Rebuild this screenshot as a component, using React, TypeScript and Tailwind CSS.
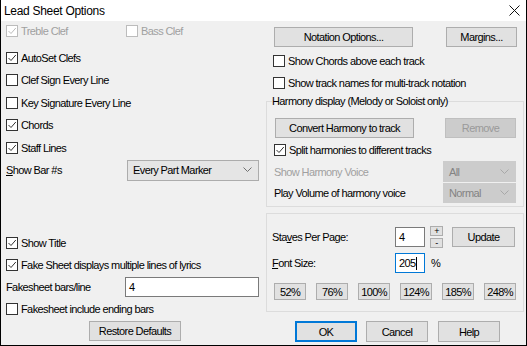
import React from "react"

type CheckProps = { label: React.ReactNode; checked?: boolean; disabled?: boolean; className?: string }

function Check({ label, checked, disabled, className = "" }: CheckProps) {
  const stroke = disabled ? "#bcbcbc" : "#333333"
  return (
    <div className={`flex items-center ${className}`}>
      <span className={`w-[12px] h-[12px] border bg-white flex items-center justify-center ${disabled ? "border-[#bcbcbc]" : "border-[#333333]"}`}>
        {checked && (
          <svg width="10" height="10" viewBox="0 0 10 10">
            <path d="M1.5 5 L4 7.5 L8.8 2" fill="none" stroke={stroke} strokeWidth="1" />
          </svg>
        )}
      </span>
      <span className={`ml-[3px] ${disabled ? "text-[#a0a0a0]" : "text-black"}`}>{label}</span>
    </div>
  )
}

function Btn({ children, className = "", disabled, primary }: { children: React.ReactNode; className?: string; disabled?: boolean; primary?: boolean }) {
  return (
    <button
      className={`flex items-center justify-center ${primary ? "border-2 border-[#0078d7]" : "border"} ${
        disabled ? "bg-[#cccccc] border-[#bfbfbf] text-[#9a9a9a]" : "bg-[#e1e1e1] text-black"
      } ${!primary && !disabled ? "border-[#adadad]" : ""} ${className}`}
    >
      {children}
    </button>
  )
}

function Select({ value, className = "", disabled }: { value: string; className?: string; disabled?: boolean }) {
  return (
    <div
      className={`flex items-center justify-between border pl-[5px] pr-[6px] ${
        disabled ? "bg-[#cccccc] border-[#cccccc] text-[#838383]" : "bg-[#e5e5e5] border-[#acacac] text-black"
      } ${className}`}
    >
      <span>{value}</span>
      <svg width="9" height="6" viewBox="0 0 9 6">
        <path d="M0.5 0.5 L4.5 4.5 L8.5 0.5" fill="none" stroke={disabled ? "#a8a8a8" : "#707070"} strokeWidth="1" />
      </svg>
    </div>
  )
}

function Field({ value, className = "", focused }: { value: string; className?: string; focused?: boolean }) {
  return (
    <div className={`flex items-center bg-white border pl-[3px] ${focused ? "border-[#0078d7]" : "border-[#7a7a7a]"} ${className}`}>
      <span>{value}</span>
      {focused && <span className="w-px h-[13px] bg-black" />}
    </div>
  )
}

export default function App() {
  return (
    <div className="w-[527px] h-[346px] bg-[#f0f0f0] border-x border-b border-black flex flex-col font-['Liberation_Sans',Arial,sans-serif] text-[11px] leading-[14px] tracking-[-0.6px] select-none">
      <div className="h-[21px] bg-white flex items-center justify-between pl-[3px] pr-[6px] shrink-0">
        <span className="text-[12px] tracking-[-0.3px]">Lead Sheet Options</span>
        <svg width="11" height="11" viewBox="0 0 11 11">
          <path d="M0.5 0.5 L10.5 10.5 M10.5 0.5 L0.5 10.5" stroke="#111" strokeWidth="1" />
        </svg>
      </div>

      <div className="flex flex-1">
        {/* left column */}
        <div className="w-[265px] pl-[5px] flex flex-col">
          <div className="h-[20px] flex items-center">
            <Check label="Treble Clef" checked disabled className="w-[120px]" />
            <Check label="Bass Clef" disabled />
          </div>
          <Check label="AutoSet Clefs" checked className="h-[22px] mt-[6px]" />
          <Check label="Clef Sign Every Line" className="h-[22.5px]" />
          <Check label="Key Signature Every Line" className="h-[22.5px]" />
          <Check label="Chords" checked className="h-[22.5px]" />
          <Check label="Staff Lines" checked className="h-[22.5px]" />
          <div className="h-[22.5px] flex items-center">
            <span className="w-[121px]">
              <span className="underline">S</span>how Bar #s
            </span>
            <Select value="Every Part Marker" className="w-[132px] h-[21px]" />
          </div>

          <Check label="Show Title" checked className="h-[22px] mt-[50px]" />
          <Check label="Fake Sheet displays multiple lines of lyrics" checked className="h-[22px]" />
          <div className="h-[22px] flex items-center">
            <span className="w-[119px]">Fakesheet bars/line</span>
            <Field value="4" className="w-[134px] h-[20px]" />
          </div>
          <Check label="Fakesheet include ending bars" className="h-[22px]" />
          <Btn className="ml-[83px] mt-[1px] w-[92px] h-[20px]">Restore Defaults</Btn>
        </div>

        {/* right column */}
        <div className="w-[258px] flex flex-col">
          <div className="flex items-center mt-[6px] pl-[8px] pr-[7px] justify-between">
            <Btn className="w-[139px] h-[20px]">Notation Options...</Btn>
            <Btn className="w-[71px] h-[20px]">Margins...</Btn>
          </div>
          <Check label="Show Chords above each track" className="h-[22px] mt-[3px] pl-[7px]" />
          <Check label="Show track names for multi-track notation" className="h-[22px] pl-[7px]" />

          <fieldset className="border border-[#dcdcdc] px-[7px] pb-[3px]">
            <legend className="ml-[-2px]">Harmony display (Melody or Soloist only)</legend>
            <div className="flex items-center justify-between mt-[10px] pl-px">
              <Btn className="w-[139px] h-[20px]">Convert Harmony to track</Btn>
              <Btn disabled className="w-[71px] h-[20px]">Remove</Btn>
            </div>
            <Check label="Split harmonies to different tracks" checked className="h-[22px] mt-px" />
            <div className="h-[21px] flex items-center justify-between">
              <span className="text-[#a0a0a0]">Show Harmony Voice</span>
              <Select value="All" disabled className="w-[73px] h-[21px]" />
            </div>
            <div className="h-[21px] flex items-center justify-between">
              <span>Play Volume of harmony voice</span>
              <Select value="Normal" disabled className="w-[73px] h-[20px]" />
            </div>
          </fieldset>

          <div className="mt-[6px] border border-[#dcdcdc] pl-[5px] pr-[7px] pt-[12px] pb-[11px] flex flex-col">
            <div className="flex items-center h-[22px]">
              <span className="w-[123px]">
                Sta<span className="underline">v</span>es Per Page:
              </span>
              <Field value="4" className="w-[30px] h-[20px]" />
              <div className="flex flex-col ml-[5px] gap-[2px]">
                <Btn className="w-[13px] h-[10px] text-[9px] leading-[9px]">+</Btn>
                <Btn className="w-[13px] h-[10px] text-[9px] leading-[9px]">-</Btn>
              </div>
              <Btn className="w-[63px] h-[20px] ml-[9px]">Update</Btn>
            </div>
            <div className="flex items-center h-[20px] mt-[5px]">
              <span className="w-[123px]">
                <span className="underline">F</span>ont Size:
              </span>
              <Field value="205" focused className="w-[30px] h-[20px]" />
              <span className="ml-[6px]">%</span>
            </div>
            <div className="flex justify-between mt-[10px] pl-[2px]">
              {["52%", "76%", "100%", "124%", "185%", "248%"].map((p) => (
                <Btn key={p} className="w-[32px] h-[17px]">
                  {p}
                </Btn>
              ))}
            </div>
          </div>

          <div className="flex mt-[9px] pl-[29px] gap-[9px]">
            <Btn primary className="w-[62px] h-[21px]">OK</Btn>
            <Btn className="w-[62px] h-[21px]">Cancel</Btn>
            <Btn className="w-[62px] h-[21px] ml-px">Help</Btn>
          </div>
        </div>
      </div>
    </div>
  )
}
